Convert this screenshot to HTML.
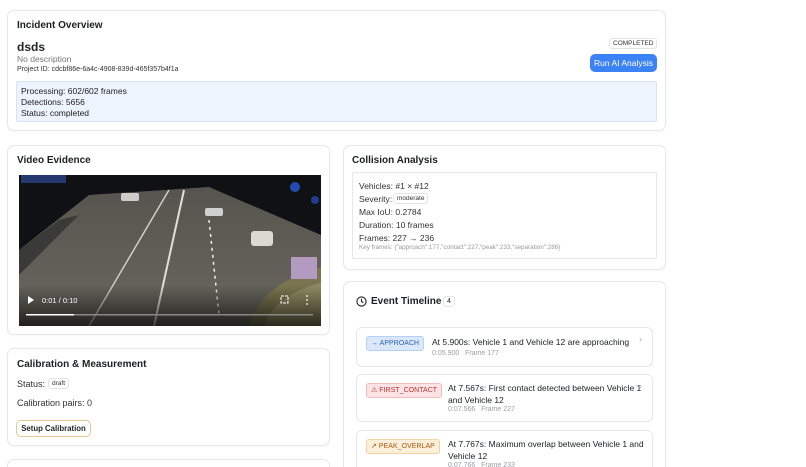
<!DOCTYPE html>
<html><head><meta charset="utf-8"><style>
*{box-sizing:border-box;margin:0;padding:0}
html,body{width:806px;height:467px;overflow:hidden}
body{background:#fff;font-family:"Liberation Sans",sans-serif;color:#1f2328;position:relative;font-size:8.5px}
.card{position:absolute;border:1px solid #e6e7ea;border-radius:7px;background:#fff;box-shadow:0 1px 2px rgba(0,0,0,.03)}
.t{position:absolute;font-size:10px;font-weight:600;color:#1c1f24}
.a{position:absolute;white-space:nowrap}
.badge{position:absolute;border:1px solid #e2e3e6;border-radius:3px;font-size:6.5px;padding:1px 3px;background:#fff}
.ev{position:absolute;left:356px;width:297px;border:1px solid #e6e7ea;border-radius:6px;background:#fff}
.tag{position:absolute;left:9px;top:8px;height:15px;border-radius:3px;font-size:6.9px;line-height:13px;padding:0 4px;border:1px solid;letter-spacing:.1px}
.et{position:absolute;font-size:8.5px;color:#1c1f24;line-height:12px}
.es{position:absolute;font-size:7px;color:#9a9ea5}
.chev{position:absolute;right:10px;top:6px;color:#aaa;font-size:9px}
</style></head><body>

<div class="card" style="left:7px;top:10px;width:659px;height:121px"></div>
<div class="t" style="left:17px;top:20px">Incident Overview</div>
<div class="a" style="left:17px;top:40px;font-size:12px;font-weight:600">dsds</div>
<div class="a" style="left:17px;top:54px;font-size:8.5px;color:#777">No description</div>
<div class="a" style="left:17px;top:66px;font-size:7px;color:#333">Project ID: cdcbf86e-6a4c-4908-839d-465f357b4f1a</div>
<div class="badge" style="left:609px;top:38px;color:#333">COMPLETED</div>
<div class="a" style="left:590px;top:54px;width:67px;height:18px;background:#3b82f6;color:#fff;border-radius:5px;font-size:8.5px;line-height:18px;text-align:center">Run AI Analysis</div>
<div class="a" style="left:16px;top:81px;width:641px;height:41px;background:#eef4fd;border:1px solid #d6e4f6;border-radius:2px"></div>
<div class="a" style="left:21px;top:86px;font-size:8.5px;line-height:11px;color:#222">Processing: 602/602 frames<br>Detections: 5656<br>Status: completed</div>

<div class="card" style="left:7px;top:145px;width:323px;height:190px"></div>
<div class="t" style="left:17px;top:155px">Video Evidence</div>
<svg class="a" style="left:19px;top:175px" width="302" height="151" viewBox="0 0 302 151">
<defs><linearGradient id="g" x1="0" y1="0" x2="0" y2="1"><stop offset="0" stop-color="#000" stop-opacity="0"/><stop offset="1" stop-color="#000" stop-opacity=".7"/></linearGradient>
<linearGradient id="r" x1="0" y1="0" x2="0" y2="1"><stop offset="0" stop-color="#55544e"/><stop offset="1" stop-color="#6a685f"/></linearGradient></defs>
<rect width="302" height="151" fill="#101114"/>
<polygon points="0,75 70,20 190,12 302,60 302,151 0,151" fill="url(#r)"/>
<polygon points="0,75 40,45 60,40 0,100" fill="#3a3b38"/>
<path d="M230 151 Q240 110 302 92 L302 151Z" fill="#7a7550"/>
<path d="M245 151 Q255 120 302 108 L302 151Z" fill="#8f8a62"/>
<rect x="272" y="82" width="26" height="22" fill="#b39ac0"/>
<rect x="232" y="56" width="22" height="15" rx="3" fill="#dcdad0"/>
<rect x="186" y="33" width="18" height="8" rx="2" fill="#d0d0d0"/>
<rect x="102" y="18" width="18" height="8" rx="2" fill="#ccc"/>
<circle cx="276" cy="12" r="5" fill="#2a5bd8" opacity=".8"/>
<circle cx="296" cy="25" r="4" fill="#2a5bd8" opacity=".6"/>
<line x1="165" y1="15" x2="135" y2="151" stroke="#e0e0d8" stroke-width="2"/>
<line x1="150" y1="15" x2="70" y2="151" stroke="#cfcfc5" stroke-width="1.5"/>
<line x1="190" y1="45" x2="200" y2="140" stroke="#eee" stroke-width="1.5" stroke-dasharray="3 4"/>
<rect x="0" y="110" width="302" height="41" fill="url(#g)"/>
<rect x="2" y="0" width="45" height="8" fill="#3355aa" opacity=".6"/>
<polygon points="9,121 9,129 15,125" fill="#fff"/>
<text x="23" y="128" font-size="7.5" fill="#fff" font-family="Liberation Sans">0:01 / 0:10</text>
<rect x="262" y="121" width="7" height="7" fill="none" stroke="#fff" stroke-width="1" stroke-dasharray="3 1"/>
<circle cx="288" cy="121" r=".9" fill="#fff"/><circle cx="288" cy="125" r=".9" fill="#fff"/><circle cx="288" cy="129" r=".9" fill="#fff"/>
<rect x="7" y="139" width="287" height="1.5" fill="#888"/>
<rect x="7" y="139" width="48" height="1.5" fill="#fff"/>
</svg>

<div class="card" style="left:7px;top:348px;width:323px;height:98px"></div>
<div class="t" style="left:17px;top:359px">Calibration &amp; Measurement</div>
<div class="a" style="left:17px;top:379px;font-size:9px;color:#333">Status:</div>
<div class="badge" style="left:48px;top:378px;color:#333">draft</div>
<div class="a" style="left:17px;top:398px;font-size:9px;color:#333">Calibration pairs: 0</div>
<div class="a" style="left:16px;top:420px;width:75px;height:17px;border:1px solid #e4c894;border-radius:5px;font-size:7.8px;font-weight:600;line-height:15px;text-align:center">Setup Calibration</div>
<div class="card" style="left:7px;top:459px;width:323px;height:30px"></div>

<div class="card" style="left:343px;top:145px;width:323px;height:125px"></div>
<div class="t" style="left:352px;top:155px">Collision Analysis</div>
<div class="a" style="left:352px;top:172px;width:305px;height:87px;border:1px solid #e6e7ea;border-radius:2px"></div>
<div class="a" style="left:359px;top:180px;font-size:8.5px;line-height:13px;color:#333">Vehicles: #1 × #12<br>Severity:<br>Max IoU: 0.2784<br>Duration: 10 frames<br>Frames: 227 → 236</div>
<div class="badge" style="left:393px;top:193px;color:#333">moderate</div>
<div class="a" style="left:359px;top:244px;font-size:6.3px;color:#999">Key frames: {"approach":177,"contact":227,"peak":233,"separation":286}</div>

<div class="card" style="left:343px;top:281px;width:323px;height:200px"></div>
<svg class="a" style="left:356px;top:296px" width="11" height="11" viewBox="0 0 12 12"><circle cx="6" cy="6" r="5" fill="none" stroke="#222" stroke-width="1.2"/><path d="M6 3v3l2 1.3" fill="none" stroke="#222" stroke-width="1.2"/></svg>
<div class="t" style="left:371px;top:296px;font-size:10px">Event Timeline</div>
<div class="badge" style="left:443px;top:296px;font-size:7px">4</div>

<div class="ev" style="top:327px;height:40px">
 <div class="tag" style="background:#dbe8fb;border-color:#b7cff3;color:#2a5fb8">→ APPROACH</div>
 <div class="et" style="left:75px;top:8px">At 5.900s: Vehicle 1 and Vehicle 12 are approaching</div>
 <div class="es" style="left:75px;top:22px">0:05.900 &nbsp; Frame 177</div><div class="chev">›</div>
</div>
<div class="ev" style="top:374px;height:48px">
 <div class="tag" style="background:#fde3e3;border-color:#f3bcbc;color:#b83232">⚠ FIRST_CONTACT</div>
 <div class="et" style="left:91px;top:7px">At 7.567s: First contact detected between Vehicle 1<br>and Vehicle 12</div>
 <div class="es" style="left:91px;top:31px">0:07.566 &nbsp; Frame 227</div><div class="chev">›</div>
</div>
<div class="ev" style="top:430px;height:48px">
 <div class="tag" style="background:#fdefd9;border-color:#f2d3a2;color:#a8570f">↗ PEAK_OVERLAP</div>
 <div class="et" style="left:91px;top:7px">At 7.767s: Maximum overlap between Vehicle 1 and<br>Vehicle 12</div>
 <div class="es" style="left:91px;top:31px">0:07.766 &nbsp; Frame 233</div><div class="chev">›</div>
</div>
</body></html>
